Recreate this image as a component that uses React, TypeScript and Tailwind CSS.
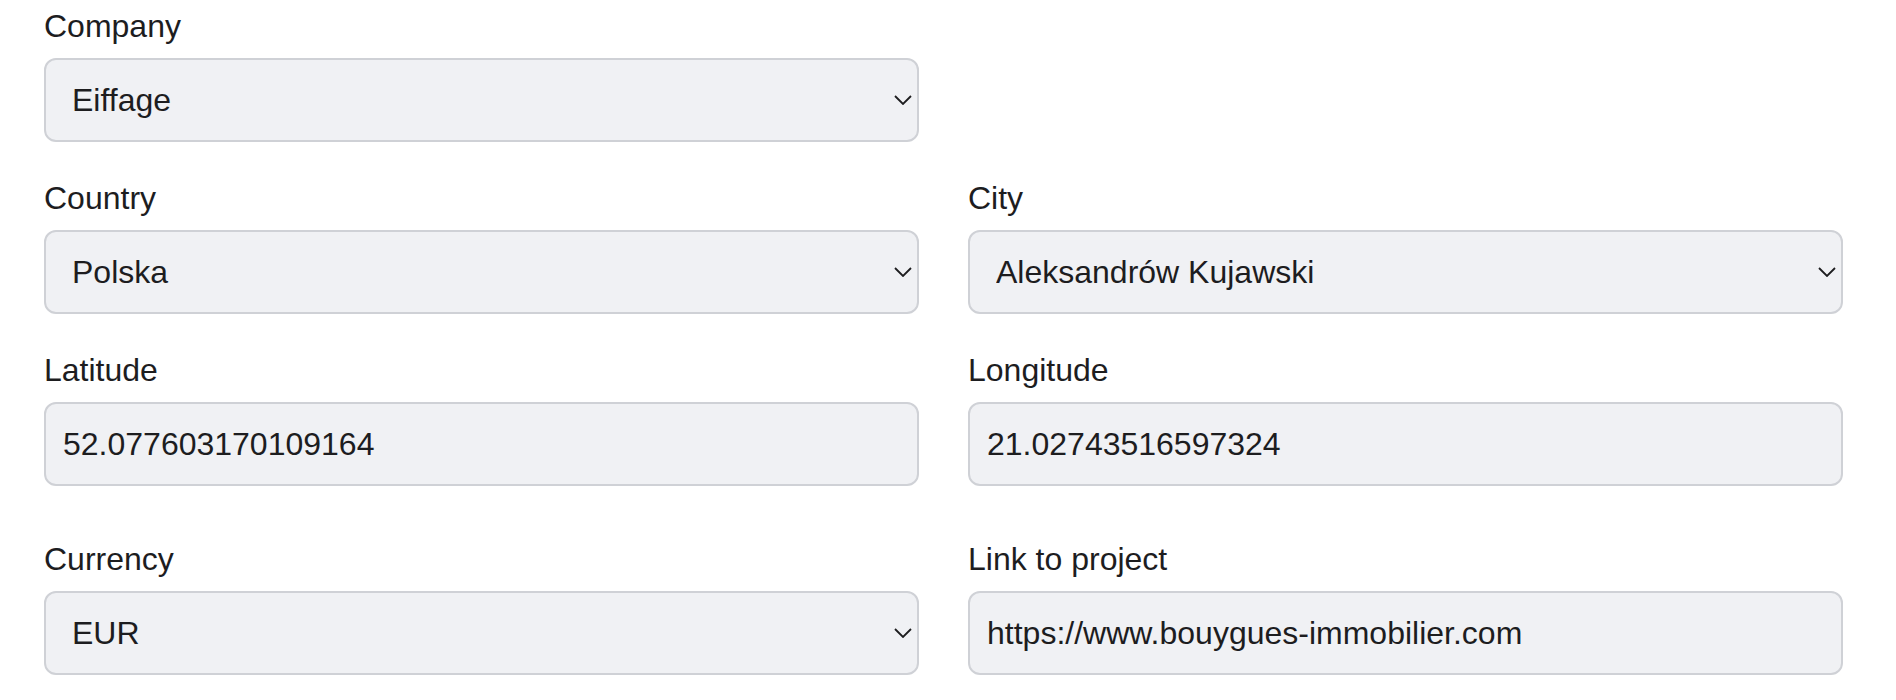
import { ReactNode } from "react";

const FONT = "font-['Liberation_Sans',Arial,sans-serif]";

function Chevron() {
  return (
    <svg
      className="pointer-events-none absolute right-[7px] top-1/2 -translate-y-1/2"
      width="18"
      height="10"
      viewBox="0 0 18 10"
      fill="none"
      aria-hidden="true"
    >
      <path d="M1 1l8 8 8-8" stroke="#1d1d1f" strokeWidth="1.8" />
    </svg>
  );
}

function Field({ label, children }: { label: string; children: ReactNode }) {
  return (
    <div>
      <label className="block text-[32px] leading-[40px] text-[#1d1d1f] mb-[12px]">{label}</label>
      {children}
    </div>
  );
}

function SelectBox({ value }: { value: string }) {
  return (
    <div className="relative">
      <select
        defaultValue={value}
        className={`${FONT} block w-full h-[84px] appearance-none rounded-[12px] border-2 border-[#cfd1d6] bg-[#f0f1f4] pl-[26px] pr-12 text-[32px] text-[#1d1d1f] outline-none`}
      >
        <option value={value}>{value}</option>
      </select>
      <Chevron />
    </div>
  );
}

function TextBox({ value }: { value: string }) {
  return (
    <input
      type="text"
      readOnly
      value={value}
      className={`${FONT} block w-full h-[84px] rounded-[12px] border-2 border-[#cfd1d6] bg-[#f0f1f4] pl-[17px] pr-4 text-[32px] text-[#1d1d1f] outline-none`}
    />
  );
}

export default function App() {
  return (
    <div className={`${FONT} bg-white min-h-[700px] pl-[44px] pr-[53px] pt-[6px]`}>
      <div className="grid grid-cols-2 gap-x-[49px] gap-y-[36px]">
        <Field label="Company">
          <SelectBox value="Eiffage" />
        </Field>
        <div />

        <Field label="Country">
          <SelectBox value="Polska" />
        </Field>
        <Field label="City">
          <SelectBox value="Aleksandrów Kujawski" />
        </Field>

        <Field label="Latitude">
          <TextBox value="52.077603170109164" />
        </Field>
        <Field label="Longitude">
          <TextBox value="21.02743516597324" />
        </Field>

        {/* extra space before the currency row */}
        <div className="mt-[17px]">
          <Field label="Currency">
            <SelectBox value="EUR" />
          </Field>
        </div>
        <div className="mt-[17px]">
          <Field label="Link to project">
            <TextBox value="https://www.bouygues-immobilier.com" />
          </Field>
        </div>
      </div>
    </div>
  );
}
